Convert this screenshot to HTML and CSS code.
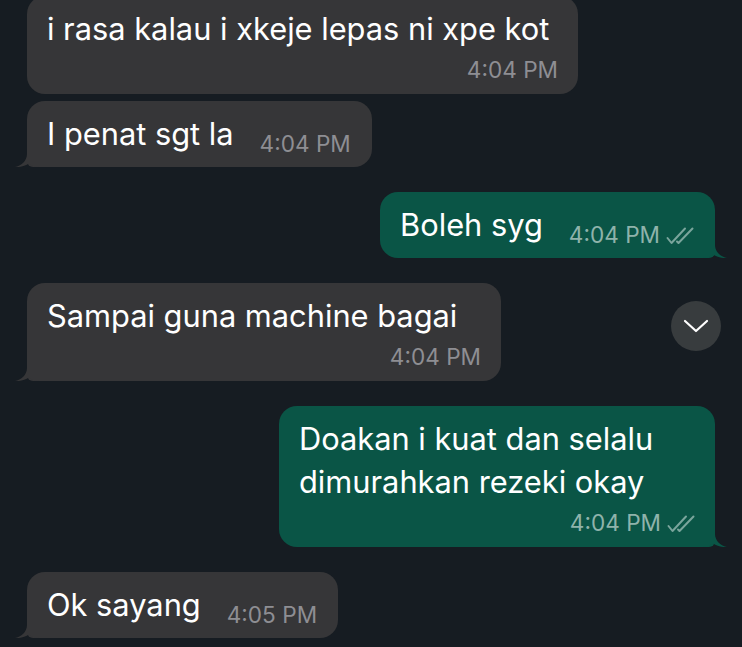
FILE: index.html
```html
<!DOCTYPE html>
<html lang="en">
<head>
  <meta charset="UTF-8" />
  <title>Chat</title>
  <link rel="stylesheet" href="styles.css">
</head>
<body>
  <div class="chat">

    <div class="msg in stacked first w-551">
      <div class="text">i rasa kalau i xkeje lepas ni xpe kot</div>
      <div class="time">4:04 PM</div>
    </div>

    <div class="msg in inline tail close">
      <div class="text">I penat sgt la</div>
      <div class="time">4:04 PM</div>
      <svg class="tail-in" viewBox="0 0 24 30"><path d="M12 0 L12 17 C12 24 6 29 0 30 C5 30.5 10 29 14 26.5 C17 29 20 30 24 30 L24 0 Z"/></svg>
    </div>

    <div class="msg out inline tail">
      <div class="text">Boleh syg</div>
      <div class="time">4:04 PM <svg class="ticks" viewBox="0 0 28 19"><path d="M1.5 12 L5.5 17 L19 2.5"/><path d="M11 15.5 L12.5 17 L26.5 2.5"/></svg></div>
      <svg class="tail-out" viewBox="0 0 24 30"><path d="M12 0 L12 17 C12 24 18 29 24 30 C19 30.5 14 29 10 26.5 C7 29 4 30 0 30 L0 0 Z"/></svg>
    </div>

    <div class="msg in stacked tail w-474">
      <div class="text">Sampai guna machine bagai</div>
      <div class="time">4:04 PM</div>
      <svg class="tail-in" viewBox="0 0 24 30"><path d="M12 0 L12 17 C12 24 6 29 0 30 C5 30.5 10 29 14 26.5 C17 29 20 30 24 30 L24 0 Z"/></svg>
    </div>

    <div class="msg out stacked tail w-436">
      <div class="text">Doakan i kuat dan selalu<br>dimurahkan rezeki okay</div>
      <div class="time">4:04 PM <svg class="ticks" viewBox="0 0 28 19"><path d="M1.5 12 L5.5 17 L19 2.5"/><path d="M11 15.5 L12.5 17 L26.5 2.5"/></svg></div>
      <svg class="tail-out" viewBox="0 0 24 30"><path d="M12 0 L12 17 C12 24 18 29 24 30 C19 30.5 14 29 10 26.5 C7 29 4 30 0 30 L0 0 Z"/></svg>
    </div>

    <div class="msg in inline tail">
      <div class="text">Ok sayang</div>
      <div class="time">4:05 PM</div>
      <svg class="tail-in" viewBox="0 0 24 30"><path d="M12 0 L12 17 C12 24 6 29 0 30 C5 30.5 10 29 14 26.5 C17 29 20 30 24 30 L24 0 Z"/></svg>
    </div>

  </div>

  <button class="scroll-down">
    <svg viewBox="0 0 26 14"><path d="M2 2 L13 12 L24 2"/></svg>
  </button>
</body>
</html>
```

FILE: styles.css
```css
body {
  margin: 0;
  background: #161c22;
  font-family: 'Inter', 'Roboto', sans-serif;
  color: #ffffff;
  height: 647px;
  overflow: hidden;
  position: relative;
}

.chat {
  display: flex;
  flex-direction: column;
  gap: 25px;
  padding: 0 27px;
}

.msg {
  position: relative;
  box-sizing: border-box;
  border-radius: 18px;
  max-width: 600px;
}

/* stacked bubbles keep the width the phone gave them */
.w-551 { width: 551px; }
.w-474 { width: 474px; }
.w-436 { width: 436px; }

.msg.first {
  margin-top: -4px;
}

.msg.close {
  margin-top: -18px;
}

.msg.in {
  align-self: flex-start;
  background: #363638;
  padding-left: 20px;
}

.msg.out {
  align-self: flex-end;
  background: #0a5546;
  padding-left: 20px;
}

.msg.tail.in {
  border-bottom-left-radius: 6px;
}

.msg.tail.out {
  border-bottom-right-radius: 6px;
}

.text {
  font-size: 30.8px;
  line-height: 43px;
}

.time {
  font-size: 22.6px;
  line-height: 24px;
  color: #8e8e93;
  white-space: nowrap;
  display: flex;
  align-items: center;
  gap: 6px;
}

.out .time {
  color: #8fb3ab;
}

.msg.inline {
  display: flex;
  align-items: flex-start;
  gap: 26px;
  padding-top: 11px;
  padding-bottom: 11px;
  padding-right: 21px;
}

.msg.inline .time {
  margin-top: 20px;
}

.msg.stacked {
  padding-top: 11px;
  padding-bottom: 12px;
  padding-right: 20px;
}

.msg.stacked .time {
  justify-content: flex-end;
  margin-top: 8px;
}

.ticks {
  width: 28px;
  height: 19px;
  fill: none;
  stroke: #7aa59c;
  stroke-width: 2;
  stroke-linecap: round;
  stroke-linejoin: round;
}

.tail-in,
.tail-out {
  position: absolute;
  bottom: 0;
  width: 24px;
  height: 30px;
}

.tail-in {
  left: -12px;
  fill: #363638;
}

.tail-out {
  right: -12px;
  fill: #0a5546;
}

.scroll-down {
  position: absolute;
  top: 301px;
  right: 21px;
  width: 50px;
  height: 50px;
  border: none;
  border-radius: 50%;
  background: #383c3e;
  padding: 0;
  display: flex;
  align-items: center;
  justify-content: center;
}

.scroll-down svg {
  width: 26px;
  height: 14px;
  fill: none;
  stroke: #ffffff;
  stroke-width: 2.2;
  stroke-linecap: round;
  stroke-linejoin: round;
}
```
